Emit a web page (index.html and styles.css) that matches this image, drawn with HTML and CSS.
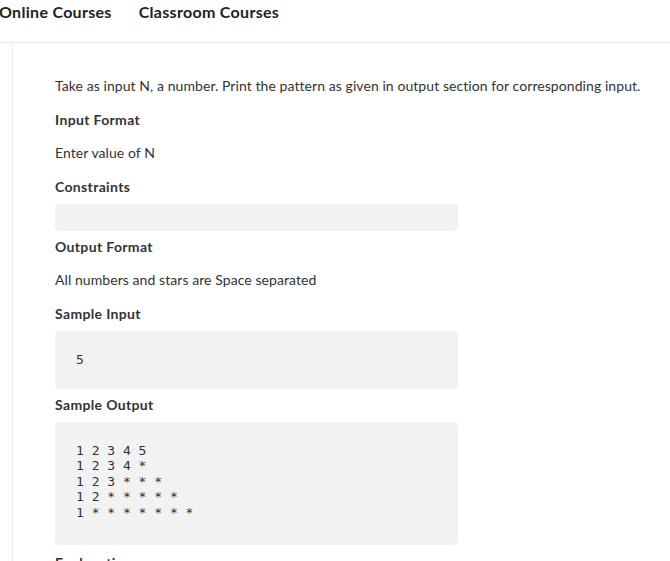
FILE: index.html
```html
<!DOCTYPE html>
<html>
<head>
<meta charset="utf-8">
<link rel="stylesheet" href="styles.css">
</head>
<body>
<nav class="topnav">
  <a class="nav-link first">Online Courses</a>
  <a class="nav-link">Classroom Courses</a>
</nav>
<main class="page">
  <section class="problem">
    <p class="text intro">Take as input N, a number. Print the pattern as given in output section for corresponding input.</p>
    <h4 class="label">Input Format</h4>
    <p class="text">Enter value of N</p>
    <h4 class="label">Constraints</h4>
    <pre class="code empty"></pre>
    <h4 class="label">Output Format</h4>
    <p class="text">All numbers and stars are Space separated</p>
    <h4 class="label">Sample Input</h4>
    <pre class="code">5</pre>
    <h4 class="label">Sample Output</h4>
    <pre class="code out">1 2 3 4 5
1 2 3 4 *
1 2 3 * * *
1 2 * * * * *
1 * * * * * * *</pre>
    <h4 class="label last">Explanation</h4>
  </section>
</main>
</body>
</html>
```
FILE: styles.css
```css
html, body {
  margin: 0;
  padding: 0;
  background: #fff;
  overflow: hidden;
}
body {
  font-family: Lato, "Noto Sans", sans-serif;
  color: #333;
}
.topnav {
  display: flex;
  gap: 27px;
  height: 42px;
  border-bottom: 1px solid #ececec;
  margin-left: -1px;
  align-items: flex-start;
}
.nav-link {
  font-size: 16px;
  font-weight: 700;
  letter-spacing: 0.3px;
  color: #222;
  line-height: 23px;
}
.page {
  margin-left: 12px;
  border-left: 1px solid #ececec;
  padding-left: 42px;
  padding-top: 33px;
  height: 600px;
}
.problem {
  display: flex;
  flex-direction: column;
  align-items: flex-start;
}
.text {
  margin: 0 0 14px;
  font-size: 14px;
  letter-spacing: 0.07px;
  line-height: 20px;
}
.label {
  margin: 0 0 13px;
  font-size: 14px;
  font-weight: 700;
  letter-spacing: 0.35px;
  line-height: 20px;
}
.label.last {
  margin-top: 2px;
}
.code {
  box-sizing: border-box;
  width: 403px;
  margin: -6px 0 6px;
  background: #f2f2f2;
  border-radius: 4px;
  padding: 21px 21px;
  font-family: "DejaVu Sans Mono", monospace;
  font-size: 13px;
  line-height: 15.5px;
  color: #333;
}
.code.empty {
  height: 27px;
  padding: 0;
}
.code.out {
  padding-bottom: 25px;
}
```
